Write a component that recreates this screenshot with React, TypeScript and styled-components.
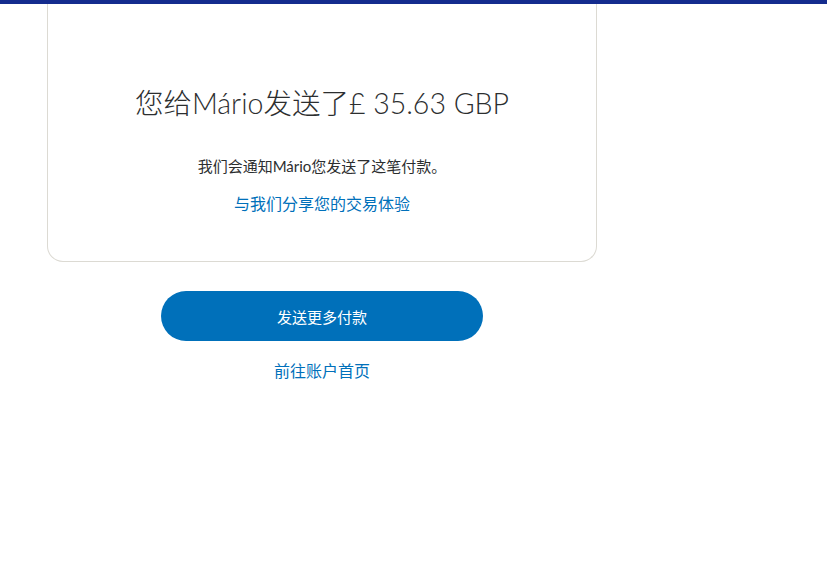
import React from 'react';
import styled, { createGlobalStyle } from 'styled-components';

const GlobalStyle = createGlobalStyle`
	html, body {
		margin: 0;
		padding: 0;
		background: #ffffff;
	}

	body {
		font-family: Lato, "Noto Sans CJK SC", sans-serif;
		color: #2c2e2f;
	}
`;

const App: React.FunctionComponent = () => (
	<>
		<GlobalStyle />
		<TopBar />
		<Page>
			<Column>
				<Card>
					<Heading>您给Mário发送了£ 35.63 GBP</Heading>
					<Notice>我们会通知Mário您发送了这笔付款。</Notice>
					<FeedbackLink href="#">与我们分享您的交易体验</FeedbackLink>
				</Card>
				<PrimaryButton type="button">发送更多付款</PrimaryButton>
				<SecondaryLink href="#">前往账户首页</SecondaryLink>
			</Column>
		</Page>
	</>
);

const TopBar = styled.div`
	position: fixed;
	top: 0;
	left: 0;
	right: 0;
	height: 4px;
	background-color: #142c8e;
	z-index: 10;
`;

const Page = styled.main`
	padding: 4px 0 0 47px;
	min-height: 578px;
`;

const Column = styled.div`
	display: flex;
	flex-direction: column;
	align-items: center;
	width: 550px;
`;

const Card = styled.section`
	box-sizing: border-box;
	width: 100%;
	display: flex;
	flex-direction: column;
	align-items: center;
	padding: 81px 20px 45px;

	border: 1px solid #dcdad3;
	border-top: none;
	border-radius: 0 0 16px 16px;
`;

const Heading = styled.h1`
	margin: 0;
	font-size: 28.5px;
	line-height: 36px;
	font-weight: 300;
	color: #2c2e2f;
	white-space: nowrap;
`;

const Notice = styled.p`
	margin: 35px 0 0;
	font-size: 15px;
	line-height: 20px;
	color: #2c2e2f;
`;

const FeedbackLink = styled.a`
	margin-top: 16px;
	font-size: 16px;
	line-height: 24px;
	color: #0070ba;
	text-decoration: none;
`;

const PrimaryButton = styled.button`
	margin-top: 29px;
	width: 322px;
	height: 50px;
	border: none;
	border-radius: 25px;
	background-color: #0070ba;
	color: #ffffff;
	font-family: Lato, "Noto Sans CJK SC", sans-serif;
	font-size: 15px;
	cursor: pointer;
`;

const SecondaryLink = styled.a`
	margin-top: 18px;
	font-size: 16px;
	line-height: 24px;
	color: #0070ba;
	text-decoration: none;
`;

export default App;
